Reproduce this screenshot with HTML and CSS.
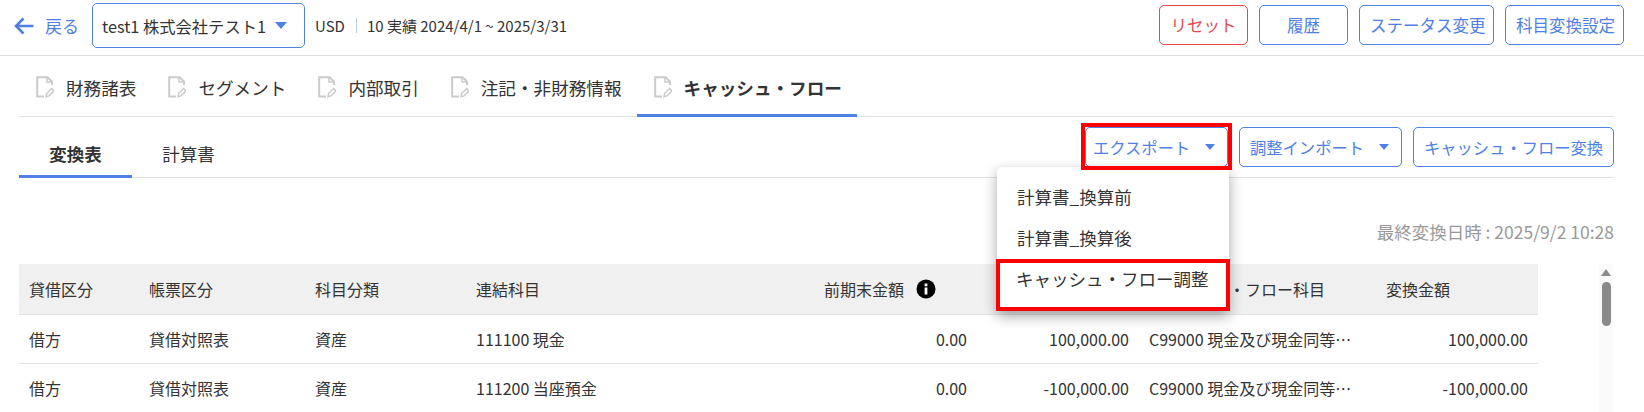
FILE: index.html
```html
<!DOCTYPE html>
<html lang="ja">
<head>
<meta charset="utf-8">
<title>キャッシュ・フロー</title>
<link rel="stylesheet" href="styles.css">
</head>
<body>
<header class="topbar">
  <a class="back">
    <svg class="back-icon" width="20" height="20" viewBox="0 0 20 20"><path d="M19.500 10H2M9.500 2.500L2 10l7.500 7.500" fill="none" stroke="#4f80e6" stroke-width="2.600"/></svg>
    <span>戻る</span>
  </a>
  <div class="select"><span>test1 株式会社テスト1</span><i class="caret"></i></div>
  <div class="meta"><span>USD</span><i class="sep"></i><span>10 実績 2024/4/1 ~ 2025/3/31</span></div>
  <div class="actions">
    <button class="btn danger w89">リセット</button>
    <button class="btn w89">履歴</button>
    <button class="btn w135">ステータス変更</button>
    <button class="btn w119">科目変換設定</button>
  </div>
</header>
<main class="content">
  <nav class="tabs">
    <a class="tab"><svg class="doc" width="18" height="22" viewBox="0 0 18 22"><use href="#doc-icon"/></svg>財務諸表</a>
    <a class="tab"><svg class="doc" width="18" height="22" viewBox="0 0 18 22"><use href="#doc-icon"/></svg>セグメント</a>
    <a class="tab"><svg class="doc" width="18" height="22" viewBox="0 0 18 22"><use href="#doc-icon"/></svg>内部取引</a>
    <a class="tab"><svg class="doc" width="18" height="22" viewBox="0 0 18 22"><use href="#doc-icon"/></svg>注記・非財務情報</a>
    <a class="tab active"><svg class="doc" width="18" height="22" viewBox="0 0 18 22"><use href="#doc-icon"/></svg>キャッシュ・フロー</a>
  </nav>
  <div class="subbar">
    <div class="subtabs">
      <a class="subtab active">変換表</a>
      <a class="subtab">計算書</a>
    </div>
    <div class="tools">
      <div class="export-wrap">
        <button class="btn tool export">エクスポート<i class="caret small"></i></button>
        <span class="mark mark-export"></span>
        <ul class="menu">
          <li>計算書_換算前</li>
          <li>計算書_換算後</li>
          <li class="marked">キャッシュ・フロー調整</li>
        </ul>
      </div>
      <button class="btn tool import">調整インポート<i class="caret small"></i></button>
      <button class="btn tool convert">キャッシュ・フロー変換</button>
    </div>
  </div>
  <div class="stamp">最終変換日時 : 2025/9/2 10:28</div>
  <div class="table-wrap">
    <table class="grid">
      <colgroup>
        <col class="c1"><col class="c2"><col class="c3"><col class="c4"><col class="c5"><col class="c6"><col class="c7"><col class="c8">
      </colgroup>
      <thead>
        <tr>
          <th>貸借区分</th><th>帳票区分</th><th>科目分類</th><th>連結科目</th>
          <th class="num"><span class="with-info">前期末金額<svg class="info" width="20" height="20" viewBox="0 0 20 20"><circle cx="10" cy="10" r="9.500" fill="#000"/><rect x="8.600" y="8.500" width="2.800" height="7" fill="#fff"/><rect x="8.600" y="4.500" width="2.800" height="2.800" fill="#fff"/></svg></span></th>
          <th class="num">当期末金額</th><th>キャッシュ・フロー科目</th><th>変換金額</th>
        </tr>
      </thead>
      <tbody>
        <tr><td>借方</td><td>貸借対照表</td><td>資産</td><td>111100 現金</td><td class="num">0.00</td><td class="num">100,000.00</td><td><span class="clip">C99000 現金及び現金同等物期末残高</span></td><td class="num">100,000.00</td></tr>
        <tr><td>借方</td><td>貸借対照表</td><td>資産</td><td>111200 当座預金</td><td class="num">0.00</td><td class="num">-100,000.00</td><td><span class="clip">C99000 現金及び現金同等物期末残高</span></td><td class="num">-100,000.00</td></tr>
      </tbody>
    </table>
    <div class="scrollbar"><i class="up"></i><i class="thumb"></i></div>
  </div>
</main>
<svg class="defs" width="0" height="0">
  <symbol id="doc-icon" viewBox="0 0 18 22">
    <path d="M8 20.500H1.200V1.200H11.500L16 5.500V9" fill="none" stroke="#cbcbcb" stroke-width="2"/>
    <path d="M11 1.500V6H16" fill="none" stroke="#cbcbcb" stroke-width="1.500"/>
    <path d="M10 20.800l.6-3.300 5-5 2.400 2.400-5 5z" fill="none" stroke="#cbcbcb" stroke-width="1.500"/>
  </symbol>
</svg>
</body>
</html>
```
FILE: styles.css
```css
* { box-sizing: border-box; }
html, body { margin: 0; height: 412px; overflow: hidden; background: #fff; }
body { font-family: "Noto Sans CJK JP", "Noto Sans", sans-serif; font-size: 16px; color: #333; }
.defs { position: absolute; }

.topbar { height: 56px; border-bottom: 1px solid #e2e2e2; display: flex; align-items: flex-start; padding: 3px 20px 0 14px; }
.back { display: flex; align-items: center; height: 45px; color: #4f80e6; gap: 11px; width: 78px; font-size: 17px; }
.back-icon { flex: none; }
.select { width: 213px; height: 45px; border: 1px solid #4f80e6; border-radius: 5px; display: flex; align-items: center; padding: 0 17px 0 9px; justify-content: space-between; font-size: 16.300px; }
.caret { display: block; width: 0; height: 0; border-left: 6px solid transparent; border-right: 6px solid transparent; border-top: 7px solid #4f80e6; }
.caret.small { border-left-width: 5px; border-right-width: 5px; border-top-width: 6px; }
.meta { display: flex; align-items: center; height: 45px; margin-left: 10px; font-size: 15px; }
.sep { width: 1px; height: 15px; background: #b9cdf3; margin: 0 10px 0 11px; }
.actions { margin-left: auto; display: flex; gap: 11px; margin-top: 2px; }
.btn { height: 40px; padding: 0 10px; border: 1px solid #4f80e6; border-radius: 5px; background: #fff; color: #4f80e6; font: inherit; font-size: 16.500px; white-space: nowrap; }
.btn.danger { border-color: #e5484d; color: #e5484d; }
.w89 { width: 89px; }
.w135 { width: 135px; }
.w119 { width: 119px; }

.content { padding: 0 30px 0 19px; }
.tabs { display: flex; height: 61px; border-bottom: 1px solid #e2e2e2; }
.tab { display: flex; align-items: center; gap: 12px; padding: 4px 15px 0 17px; height: 61px; border-bottom: 3px solid transparent; font-size: 17.600px; }
.tab.active { border-bottom-color: #4f80e6; font-weight: 700; }
.doc { flex: none; }

.subbar { display: flex; justify-content: space-between; height: 61px; border-bottom: 1px solid #e2e2e2; }
.subtabs { display: flex; }
.subtab { display: flex; width: 113px; justify-content: center; align-items: center; padding-top: 15px; height: 61px; border-bottom: 3px solid transparent; font-size: 17.500px; }
.subtab.active { border-bottom-color: #4f80e6; font-weight: 700; }
.tools { display: flex; gap: 11px; padding-top: 10px; }
.tool { display: flex; align-items: center; gap: 15px; font-size: 16.300px; }
.export-wrap { position: relative; }
.export { width: 143px; padding-left: 7px; }
.import { width: 163px; }
.convert { width: 201px; }
.mark { position: absolute; z-index: 3; border: 4px solid #f00; pointer-events: none; }
.mark-export { left: -4px; top: -4px; width: 151px; height: 47px; }
.menu { position: absolute; z-index: 2; left: -88px; top: 40px; width: 232px; margin: 0; padding: 9px 0 0; list-style: none; background: #fff; border-radius: 5px 5px 0 0; box-shadow: 0 5px 14px rgba(0,0,0,.35); font-size: 17.500px; }
.menu li { height: 41px; padding-left: 20px; line-height: 41px; }
.menu li.marked { height: 52px; margin: 1px -1px 0; border: 4px solid #f00; padding-left: 16px; line-height: 32px; }

.stamp { text-align: right; color: #999; margin-top: 42px; line-height: 24px; font-size: 17.500px; }
.table-wrap { display: flex; margin-top: 20px; }
.grid { width: 1519px; table-layout: fixed; border-collapse: collapse; }
.c1 { width: 120px; } .c2 { width: 166px; } .c3 { width: 161px; } .c4 { width: 334px; }
.c5 { width: 177px; } .c6 { width: 162px; } .c7 { width: 237px; } .c8 { width: 162px; }
.grid th, .grid td { text-align: left; font-weight: 400; padding: 0 10px; white-space: nowrap; border-bottom: 1px solid #e2e2e2; }
.grid th { background: #f0f0f0; height: 50px; }
.grid td { height: 49px; }
.grid .num { text-align: right; }
.with-info { display: inline-flex; align-items: center; gap: 12px; }
.info { flex: none; margin-right: 31px; }
.clip { display: block; overflow: hidden; text-overflow: ellipsis; width: 208px; }
.scrollbar { margin-left: 61px; width: 14px; background: #fafafa; display: flex; flex-direction: column; align-items: center; padding-top: 5px; height: 148px; }
.up { width: 0; height: 0; border-left: 5px solid transparent; border-right: 5px solid transparent; border-bottom: 7px solid #8a8a8a; }
.thumb { width: 9px; height: 44px; background: #8a8a8a; border-radius: 4.500px; margin-top: 6px; flex: none; }
```
